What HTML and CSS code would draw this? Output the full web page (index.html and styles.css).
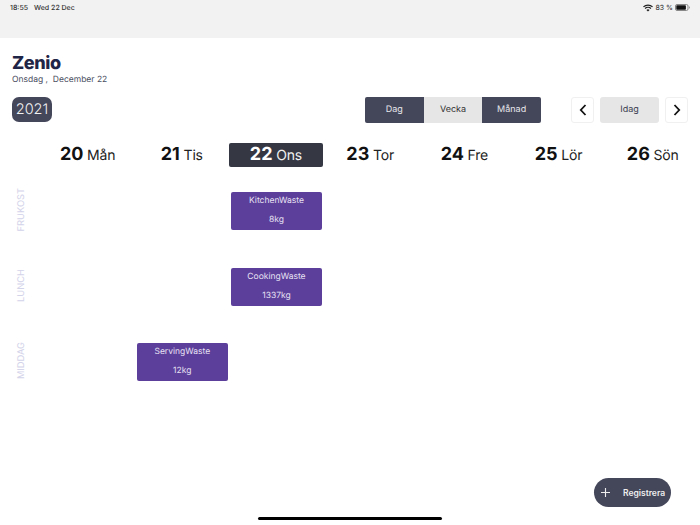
FILE: index.html
```html
<!DOCTYPE html>
<html lang="sv">
<head>
<meta charset="utf-8">
<title>Zenio</title>
<link rel="stylesheet" href="styles.css">
</head>
<body>
<div class="status">
  <div class="status-left"><span>18:55</span><span>Wed 22 Dec</span></div>
  <div class="status-right">
    <svg class="wifi" width="10" height="8" viewBox="0 0 10 8"><path d="M5 7.6 3.4 5.9a2.3 2.3 0 0 1 3.2 0zM2.5 5 1.6 4a4.9 4.9 0 0 1 6.8 0l-.9 1a3.6 3.6 0 0 0-5 0zM.9 3.3 0 2.4a7.2 7.2 0 0 1 10 0l-.9.9a6 6 0 0 0-8.2 0z" fill="#222"/></svg>
    <span>83 %</span>
    <svg class="battery" width="15" height="7" viewBox="0 0 15 7"><rect x=".5" y=".5" width="12.5" height="6" rx="1.5" fill="none" stroke="#888"/><rect x="1.3" y="1.3" width="9.6" height="4.4" rx=".7" fill="#111"/><path d="M14 2.3c.6.2.8.7.8 1.2s-.2 1-.8 1.2z" fill="#888"/></svg>
  </div>
</div>
<header class="title-block">
  <h1>Zenio</h1>
  <p>Onsdag ,&nbsp; December 22</p>
</header>
<div class="toolbar">
  <div class="year">2021</div>
  <div class="controls">
    <div class="segments">
      <div class="seg dark">Dag</div>
      <div class="seg light">Vecka</div>
      <div class="seg dark">Månad</div>
    </div>
    <div class="nav">
      <div class="arrow"><svg width="8" height="12" viewBox="0 0 8 12"><path d="M6.5 1 1.8 6l4.7 5" fill="none" stroke="#111" stroke-width="1.8"/></svg></div>
      <div class="today">Idag</div>
      <div class="arrow"><svg width="8" height="12" viewBox="0 0 8 12"><path d="M1.5 1 6.2 6l-4.7 5" fill="none" stroke="#111" stroke-width="1.8"/></svg></div>
    </div>
  </div>
</div>
<div class="week-head">
  <div class="day"><b>20</b> Mån</div>
  <div class="day"><b>21</b> Tis</div>
  <div class="day current"><b>22</b> Ons</div>
  <div class="day"><b>23</b> Tor</div>
  <div class="day"><b>24</b> Fre</div>
  <div class="day"><b>25</b> Lör</div>
  <div class="day"><b>26</b> Sön</div>
</div>
<main class="calendar">
  <div class="meal"><span>FRUKOST</span></div>
  <div class="card col-3"><span>KitchenWaste</span><span>8kg</span></div>

  <div class="meal"><span>LUNCH</span></div>
  <div class="card col-3"><span>CookingWaste</span><span>1337kg</span></div>

  <div class="meal"><span>MIDDAG</span></div>
  <div class="card col-2"><span>ServingWaste</span><span>12kg</span></div>
</main>
<button class="fab"><svg width="9" height="9" viewBox="0 0 9 9"><path d="M4.5 0v9M0 4.5h9" stroke="#eee" stroke-width="1.1"/></svg><span>Registrera</span></button>
<div class="home-bar"></div>
</body>
</html>
```
FILE: styles.css
```css
* { box-sizing: border-box; }
html, body { margin: 0; height: 100%; }
body {
  width: 700px;
  height: 525px;
  position: relative;
  overflow: hidden;
  background: #fff;
  font-family: Inter, "Liberation Sans", sans-serif;
  color: #111;
  text-rendering: geometricPrecision;
}
.status {
  height: 38px;
  background: #f2f2f2;
  display: flex;
  justify-content: space-between;
  padding: 3px 10px 0;
  font-size: 7px;
  line-height: 9px;
  color: #333;
}
.status-left { display: flex; gap: 6px; font-weight: 500; }
.status-right { display: flex; gap: 2px; height: 9px; align-items: center; }
.wifi { margin-right: 1px; }
.title-block { padding: 17px 12px 0; }
.title-block h1 {
  margin: 0;
  font-size: 18px;
  line-height: 18px;
  font-weight: 800;
  letter-spacing: -0.4px;
  color: #1f2546;
}
.title-block p {
  margin: 2px 0 0;
  font-size: 8.5px;
  line-height: 11px;
  color: #4b4f62;
}
.toolbar {
  display: flex;
  justify-content: space-between;
  align-items: center;
  padding: 10px 12px 0;
}
.year {
  width: 40px;
  height: 25px;
  border-radius: 7px;
  background: #44465a;
  color: #f2f2f2;
  font-size: 14.5px;
  font-weight: 300;
  line-height: 25px;
  text-align: center;
}
.controls { display: flex; gap: 30px; margin-top: 1px; }
.segments { display: flex; border-radius: 2px; overflow: hidden; }
.seg {
  width: 58.7px;
  height: 26px;
  font-size: 9px;
  line-height: 26px;
  text-align: center;
}
.seg.dark { background: #44465a; color: #e8e8ec; }
.seg.light { background: #e6e6e6; color: #333; }
.nav { display: flex; gap: 6px; }
.arrow {
  width: 23px;
  height: 26px;
  border: 1px solid #f0f0f0;
  border-radius: 3px;
  display: flex;
  align-items: center;
  justify-content: center;
  background: #fff;
}
.today {
  width: 59px;
  height: 26px;
  border-radius: 3px;
  background: #e6e6e6;
  color: #3a3d50;
  font-size: 9px;
  line-height: 26px;
  text-align: center;
}
.week-head {
  display: grid;
  grid-template-columns: repeat(7, 94.2px);
  padding-left: 40.5px;
  margin-top: 20px;
  height: 23px;
}
.day {
  margin: 0 0.5px;
  font-size: 14px;
  letter-spacing: -0.2px;
  line-height: 23px;
  text-align: center;
  color: #222;
  white-space: nowrap;
}
.day b { font-size: 18px; font-weight: 700; color: #111; letter-spacing: 0; }
.day.current {
  background: #353742;
  color: #f0f0f0;
  border-radius: 2px;
}
.day.current b { color: #fff; }
.calendar {
  display: grid;
  grid-template-columns: 40.5px repeat(7, 94.2px);
  grid-auto-rows: 38px;
  row-gap: 37.5px;
  margin-top: 26px;
}
.meal {
  grid-column: 1;
  display: flex;
  align-items: center;
  justify-content: center;
  padding: 0 0 3px 2px;
}
.meal span {
  writing-mode: vertical-rl;
  transform: rotate(180deg);
  font-size: 9.3px;
  color: #d3d3ea;
}
.card {
  margin: 0 1px 0 2px;
  background: #5c3f9a;
  border-radius: 2px;
  color: #e7e1f4;
  font-size: 8.5px;
  display: flex;
  flex-direction: column;
  align-items: center;
  justify-content: space-between;
  padding: 4px 0;
  line-height: 11px;
}
.col-2 { grid-column: 3; }
.col-3 { grid-column: 4; }
.fab {
  position: absolute;
  left: 594px;
  top: 478px;
  width: 77px;
  height: 29px;
  padding: 0 0 0 7px;
  border: 0;
  border-radius: 15px;
  background: #44465a;
  color: #eee;
  font-family: inherit;
  font-size: 8.5px;
  font-weight: 600;
  display: flex;
  align-items: center;
  gap: 13px;
}
.home-bar {
  position: absolute;
  left: 258px;
  top: 517px;
  width: 184px;
  height: 3px;
  border-radius: 2px;
  background: #000;
}
```
